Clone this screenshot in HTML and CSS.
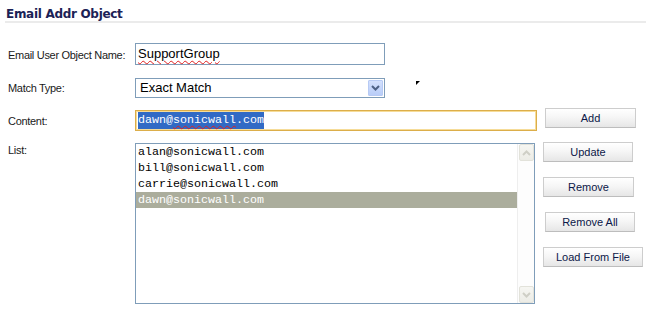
FILE: index.html
```html
<!DOCTYPE html>
<html>
<head>
<meta charset="utf-8">
<link rel="stylesheet" href="styles.css">
</head>
<body>
<div class="title">Email Addr Object</div>
<div class="form">
  <div class="label">Email User Object Name:</div>
  <div class="field name"><span class="spell">SupportGroup</span></div>
  <div></div>

  <div class="label">Match Type:</div>
  <div class="field select">
    <span class="sel-text">Exact Match</span>
    <span class="sel-btn">
      <svg width="9" height="6" viewBox="0 0 9 6"><path d="M1 1 L4.5 4.5 L8 1" fill="none" stroke="#4d6185" stroke-width="2"/></svg>
    </span>
  </div>
  <div></div>

  <div class="label">Content:</div>
  <div class="field content"><span class="sel">dawn@<span class="spell">sonicwall</span>.com</span></div>
  <div class="btn add">Add</div>

  <div class="label top">List:</div>
  <div class="list">
    <div class="rows">
      <div class="row">alan@sonicwall.com</div>
      <div class="row">bill@sonicwall.com</div>
      <div class="row">carrie@sonicwall.com</div>
      <div class="row on">dawn@sonicwall.com</div>
    </div>
    <div class="scroll">
      <div class="sbtn"><svg width="9" height="6" viewBox="0 0 9 6"><path d="M1 5 L4.5 1.5 L8 5" fill="none" stroke="#cfcfc6" stroke-width="2"/></svg></div>
      <div class="sbtn"><svg width="9" height="6" viewBox="0 0 9 6"><path d="M1 1 L4.5 4.5 L8 1" fill="none" stroke="#cfcfc6" stroke-width="2"/></svg></div>
    </div>
  </div>
  <div class="btns">
    <div class="btn b-update">Update</div>
    <div class="btn b-remove">Remove</div>
    <div class="btn b-removeall">Remove All</div>
    <div class="btn b-load">Load From File</div>
  </div>
</div>
<div class="cursor"></div>
</body>
</html>
```
FILE: styles.css
```css
html, body {
  margin: 0;
  padding: 0;
  background: #ffffff;
}
body {
  font-family: "Liberation Sans", Arial, sans-serif;
  font-size: 11px;
  color: #1a1a1a;
  position: relative;
  width: 646px;
  height: 314px;
  overflow: hidden;
}
.title {
  margin: 0 0 0 5px;
  padding: 7px 0 0 1px;
  height: 14px;
  line-height: 14px;
  font-family: "DejaVu Sans", Verdana, sans-serif;
  font-weight: bold;
  font-size: 12px;
  letter-spacing: -0.3px;
  color: #1c2256;
  border-bottom: 2px solid #ebebeb;
}
.form {
  display: grid;
  grid-template-columns: 135px 410px auto;
  grid-template-rows: 23px 20px 21px 161px;
  row-gap: 12px;
  margin-top: 20px;
  align-items: center;
}
.label {
  padding-left: 8px;
  font-size: 11px;
  letter-spacing: -0.3px;
  line-height: 14px;
  color: #1a1a1a;
  white-space: nowrap;
}
.label.top {
  align-self: start;
}
.field {
  box-sizing: border-box;
  border: 1px solid #7f9db9;
  font-size: 13px;
  color: #000;
  background: #fff;
}
.name {
  width: 250px;
  height: 22px;
  line-height: 20px;
  padding-left: 2px;
  align-self: start;
}
.spell {
  text-decoration: underline wavy #e02020;
  text-decoration-thickness: 1px;
  text-underline-offset: 2px;
}
.select {
  width: 250px;
  height: 20px;
  display: flex;
  align-items: center;
  justify-content: space-between;
  padding: 0 1px 0 4px;
}
.sel-text {
  line-height: 18px;
}
.sel-btn {
  box-sizing: border-box;
  width: 15px;
  height: 16px;
  border: 1px solid #b7caf4;
  border-radius: 1px;
  background: linear-gradient(#d3e0fd, #b9cdf8);
  display: flex;
  align-items: center;
  justify-content: center;
}
.content {
  width: 402px;
  height: 21px;
  border: 1px solid #dcae4a;
  box-shadow: inset 0 0 0 1px #f6dc98;
  padding-left: 2px;
  font-family: "Liberation Mono", "Courier New", monospace;
  font-size: 11.67px;
  line-height: 19px;
}
.sel {
  background: #316ac5;
  color: #fff;
  padding: 1px 0 2px;
}
.btn {
  box-sizing: border-box;
  height: 20px;
  border: 1px solid #cdcdcd;
  border-bottom-color: #bdbdbd;
  background: linear-gradient(#ffffff, #f6f6f6 45%, #e6e6e6);
  color: #0c1748;
  font-size: 11px;
  line-height: 18px;
  text-align: center;
}
.add {
  width: 91px;
  margin-top: -2px;
  align-self: start;
}
.list {
  box-sizing: border-box;
  width: 400px;
  height: 161px;
  border: 1px solid #7f9db9;
  display: flex;
  align-self: start;
}
.rows {
  flex: 1;
  font-family: "Liberation Mono", "Courier New", monospace;
  font-size: 11.67px;
  color: #000;
}
.row {
  height: 16px;
  line-height: 16px;
  padding-left: 2px;
}
.row.on {
  background: #abad9c;
  color: #fff;
}
.scroll {
  width: 17px;
  box-sizing: border-box;
  border-left: 1px solid #eeeeee;
  display: flex;
  flex-direction: column;
  justify-content: space-between;
  padding: 0 0 0 1px;
  background: #fdfdfd;
}
.sbtn {
  box-sizing: border-box;
  width: 15px;
  height: 17px;
  border: 1px solid #e2e2da;
  border-radius: 2px;
  background: linear-gradient(#f6f6f2, #ececE6);
  display: flex;
  align-items: center;
  justify-content: center;
}
.btns {
  align-self: start;
  display: flex;
  flex-direction: column;
  align-items: flex-start;
  gap: 15px;
  margin-top: -1px;
}
.b-update { width: 90px; margin-left: -2px; }
.b-remove { width: 91px; margin-left: -2px; }
.b-removeall { width: 90px; }
.b-load { width: 100px; margin-left: -2px; }
.cursor {
  position: absolute;
  left: 416px;
  top: 81px;
  width: 0;
  height: 0;
  border-top: 4px solid #000;
  border-right: 4px solid transparent;
}
```
